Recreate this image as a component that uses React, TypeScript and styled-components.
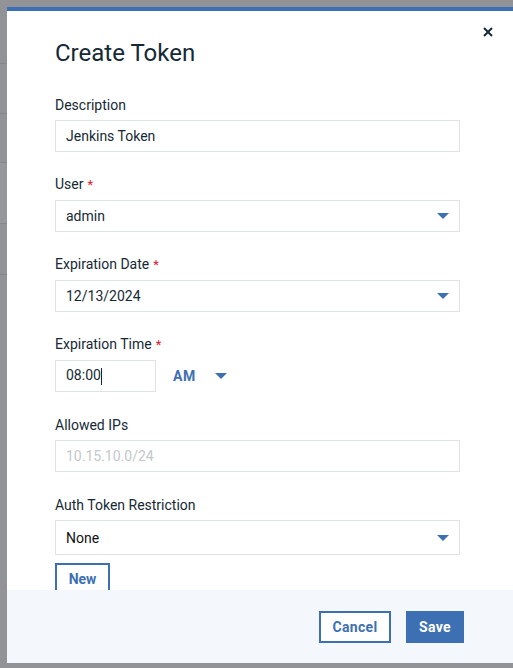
import React from "react";
import styled, { createGlobalStyle } from "styled-components";

const GlobalStyle = createGlobalStyle`
  html, body { margin: 0; padding: 0; }
  body {
    width: 513px;
    height: 668px;
    overflow: hidden;
    background: #929396;
    font-family: Roboto, "Liberation Sans", sans-serif;
  }
  * { box-sizing: border-box; }
`;

const Backdrop = styled.div`
  height: 668px;
  display: flex;
  flex-direction: column;
`;

const BackdropRow = styled.div<{ $h: number; $shade?: boolean }>`
  height: ${(p) => p.$h}px;
  flex: none;
  border-bottom: 1px solid #86878b;
  background: ${(p) => (p.$shade ? "#96979a" : "#929396")};
`;

const Overlay = styled.div`
  position: fixed;
  inset: 0;
  display: flex;
  padding: 7px 3px 5px 7px;
`;

const Modal = styled.div`
  position: relative;
  flex: 1;
  display: flex;
  flex-direction: column;
  background: #ffffff;
  border-top: 4px solid #3d70b2;
`;

const Body = styled.div`
  flex: 1;
  overflow: hidden;
  padding: 27px 55px 0 48px;
`;

const Title = styled.h2`
  margin: 0 0 28px;
  font-size: 24px;
  line-height: 30px;
  font-weight: 400;
  color: #152935;
`;

const CloseButton = styled.button`
  position: absolute;
  top: 14px;
  right: 20px;
  width: 14px;
  height: 14px;
  padding: 0;
  border: none;
  background: transparent;
  display: flex;
  align-items: center;
  justify-content: center;
  cursor: pointer;
`;

const Form = styled.div`
  display: flex;
  flex-direction: column;
  gap: 23px;
`;

const Field = styled.div<{ $push?: number }>`
  display: flex;
  flex-direction: column;
  gap: 6px;
  margin-top: ${(p) => p.$push ?? 0}px;
`;

const Label = styled.label`
  font-size: 14px;
  line-height: 18px;
  color: #152935;
`;

const Req = styled.span`
  color: #e0182d;
  margin-left: 4px;
  font-size: 13px;
`;

const Box = styled.div<{ $w?: number; $h?: number }>`
  position: relative;
  width: ${(p) => (p.$w ? `${p.$w}px` : "100%")};
  height: ${(p) => p.$h ?? 32}px;
  border: 1px solid #dfe3e6;
  background: #ffffff;
  display: flex;
  align-items: center;
  padding: 0 10px;
  font-size: 14px;
  color: #152935;
`;

const Value = styled.span<{ $muted?: boolean; $dark?: boolean }>`
  flex: 1;
  color: ${(p) => (p.$muted ? "#c4c8cc" : p.$dark ? "#111111" : "#152935")};
`;

const Caret = styled.span`
  display: inline-block;
  width: 1px;
  height: 17px;
  background: #152935;
  vertical-align: middle;
`;

const TimeRow = styled.div`
  display: flex;
  align-items: center;
`;

const AmPm = styled.div`
  display: flex;
  align-items: center;
  margin-left: 17px;
  gap: 19px;
  font-size: 14px;
  font-weight: 700;
  color: #3d70b2;
  letter-spacing: 0.5px;
`;

const WideBox = styled(Box)`
  width: 405px;
`;

const NewButton = styled.button`
  margin-top: 2px;
  align-self: flex-start;
  height: 32px;
  width: 55px;
  border: 2px solid #3d70b2;
  background: #ffffff;
  color: #3d70b2;
  font-family: inherit;
  font-size: 14px;
  font-weight: 700;
  padding: 0;
`;

const Footer = styled.div`
  height: 73px;
  flex: none;
  background: #f4f7fb;
  display: flex;
  justify-content: flex-end;
  align-items: center;
  gap: 15px;
  padding: 1px 51px 0 0;
`;

const Button = styled.button<{ $primary?: boolean }>`
  height: 32px;
  padding: 0;
  font-family: inherit;
  font-size: 14px;
  font-weight: 700;
  letter-spacing: 0.3px;
  border: 2px solid #3d70b2;
  background: ${(p) => (p.$primary ? "#3d70b2" : "#ffffff")};
  color: ${(p) => (p.$primary ? "#ffffff" : "#3d70b2")};
  width: ${(p) => (p.$primary ? 58 : 72)}px;
`;

const Arrow = () => (
  <svg width="12" height="6" viewBox="0 0 12 6" style={{ flex: "none" }}>
    <path d="M0 0h12L6 6z" fill="#3d70b2" />
  </svg>
);

const CloseIcon = () => (
  <svg width="10" height="10" viewBox="0 0 10 10">
    <path d="M1 1l8 8M9 1L1 9" stroke="#152935" strokeWidth="2" />
  </svg>
);

export default function App() {
  return (
    <>
      <GlobalStyle />
      <Backdrop>
        <BackdropRow $h={64} />
        <BackdropRow $h={50} />
        <BackdropRow $h={49} />
        <BackdropRow $h={61} $shade />
        <BackdropRow $h={51} />
      </Backdrop>
      <Overlay>
        <Modal>
          <CloseButton aria-label="close">
            <CloseIcon />
          </CloseButton>
          <Body>
            <Title>Create Token</Title>
            <Form>
              <Field>
                <Label>Description</Label>
                <Box>
                  <Value>Jenkins Token</Value>
                </Box>
              </Field>
              <Field>
                <Label>
                  User<Req>*</Req>
                </Label>
                <Box>
                  <Value>admin</Value>
                  <Arrow />
                </Box>
              </Field>
              <Field>
                <Label>
                  Expiration Date<Req>*</Req>
                </Label>
                <Box>
                  <Value>12/13/2024</Value>
                  <Arrow />
                </Box>
              </Field>
              <Field>
                <Label>
                  Expiration Time<Req>*</Req>
                </Label>
                <TimeRow>
                  <Box $w={101}>
                    <Value>
                      08:00
                      <Caret />
                    </Value>
                  </Box>
                  <AmPm>
                    AM
                    <Arrow />
                  </AmPm>
                </TimeRow>
              </Field>
              <Field $push={1}>
                <Label>Allowed IPs</Label>
                <Box>
                  <Value $muted>10.15.10.0/24</Value>
                </Box>
              </Field>
              <Field $push={1}>
                <Label>Auth Token Restriction</Label>
                <WideBox $h={35}>
                  <Value $dark>None</Value>
                  <Arrow />
                </WideBox>
                <NewButton>New</NewButton>
              </Field>
            </Form>
          </Body>
          <Footer>
            <Button>Cancel</Button>
            <Button $primary>Save</Button>
          </Footer>
        </Modal>
      </Overlay>
    </>
  );
}
